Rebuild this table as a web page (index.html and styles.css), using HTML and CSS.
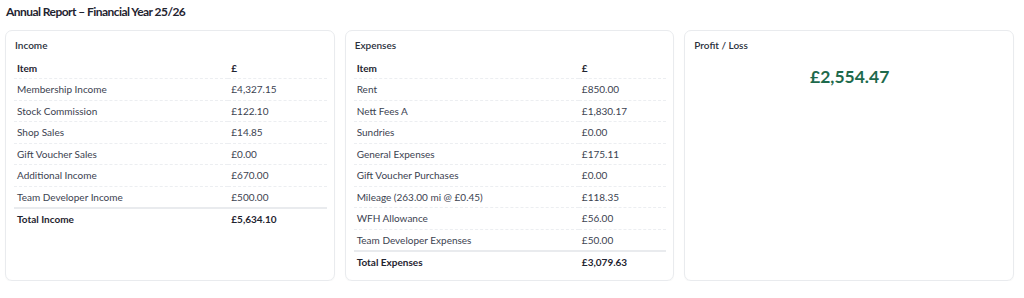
FILE: index.html
```html
<!DOCTYPE html>
<html lang="en">
<head>
<meta charset="utf-8">
<title>Annual Report</title>
<link rel="stylesheet" href="styles.css">
</head>
<body>
<div class="page">
  <h1 class="title">Annual Report – Financial Year 25/26</h1>
  <div class="grid">
    <section class="card">
      <h2 class="card-title">Income</h2>
      <table class="tbl">
        <thead><tr><th>Item</th><th>£</th></tr></thead>
        <tbody>
          <tr><td>Membership Income</td><td>£4,327.15</td></tr>
          <tr><td>Stock Commission</td><td>£122.10</td></tr>
          <tr><td>Shop Sales</td><td>£14.85</td></tr>
          <tr><td>Gift Voucher Sales</td><td>£0.00</td></tr>
          <tr><td>Additional Income</td><td>£670.00</td></tr>
          <tr><td>Team Developer Income</td><td>£500.00</td></tr>
        </tbody>
        <tfoot><tr><td>Total Income</td><td>£5,634.10</td></tr></tfoot>
      </table>
    </section>
    <section class="card">
      <h2 class="card-title">Expenses</h2>
      <table class="tbl">
        <thead><tr><th>Item</th><th>£</th></tr></thead>
        <tbody>
          <tr><td>Rent</td><td>£850.00</td></tr>
          <tr><td>Nett Fees A</td><td>£1,830.17</td></tr>
          <tr><td>Sundries</td><td>£0.00</td></tr>
          <tr><td>General Expenses</td><td>£175.11</td></tr>
          <tr><td>Gift Voucher Purchases</td><td>£0.00</td></tr>
          <tr><td>Mileage (263.00 mi @ £0.45)</td><td>£118.35</td></tr>
          <tr><td>WFH Allowance</td><td>£56.00</td></tr>
          <tr><td>Team Developer Expenses</td><td>£50.00</td></tr>
        </tbody>
        <tfoot><tr><td>Total Expenses</td><td>£3,079.63</td></tr></tfoot>
      </table>
    </section>
    <section class="card">
      <h2 class="card-title">Profit / Loss</h2>
      <div class="profit">£2,554.47</div>
    </section>
  </div>
</div>
</body>
</html>
```

FILE: styles.css
```css
* { box-sizing: border-box; }
html, body { margin: 0; padding: 0; background: #ffffff; }
body {
  font-family: Lato, "Liberation Sans", sans-serif;
  color: #3b4250;
}
.page { padding: 4px 10px 0 5px; }
.title {
  margin: 0 0 0 1px;
  font-size: 12px;
  line-height: 16px;
  font-weight: 700;
  letter-spacing: -0.55px;
  color: #1f2430;
}
.grid {
  margin-top: 10px;
  display: grid;
  grid-template-columns: 1fr 1fr 1fr;
  column-gap: 10px;
  height: 251px;
}
.card {
  border: 1px solid #e9ebee;
  border-radius: 7px;
  box-shadow: 0 1px 1px rgba(0,0,0,0.04);
  padding: 8px 7px 8px 8px;
}
.card-title {
  margin: 0 0 0 1px;
  font-size: 10px;
  line-height: 13px;
  font-weight: 600;
  color: #2a303c;
}
.tbl {
  width: 100%;
  border-collapse: collapse;
  margin-top: 5px;
  font-size: 10px;
}
.tbl th, .tbl td {
  text-align: left;
  padding: 0 3px;
  height: 21.5px;
  line-height: 14px;
}
.tbl th {
  font-weight: 700;
  color: #1f2430;
}
.tbl thead tr, .tbl tbody tr {
  border-bottom: 1px dashed #eceef1;
}
.tbl tbody tr:last-child { border-bottom: none; }
.tbl tfoot tr { border-top: 2px solid #e9ebee; }
.tbl tfoot td { font-weight: 700; color: #1f2430; }
.profit {
  text-align: center;
  margin-top: 14px;
  font-size: 17.5px;
  line-height: 22px;
  font-weight: 700;
  color: #1e6a4c;
}
```
